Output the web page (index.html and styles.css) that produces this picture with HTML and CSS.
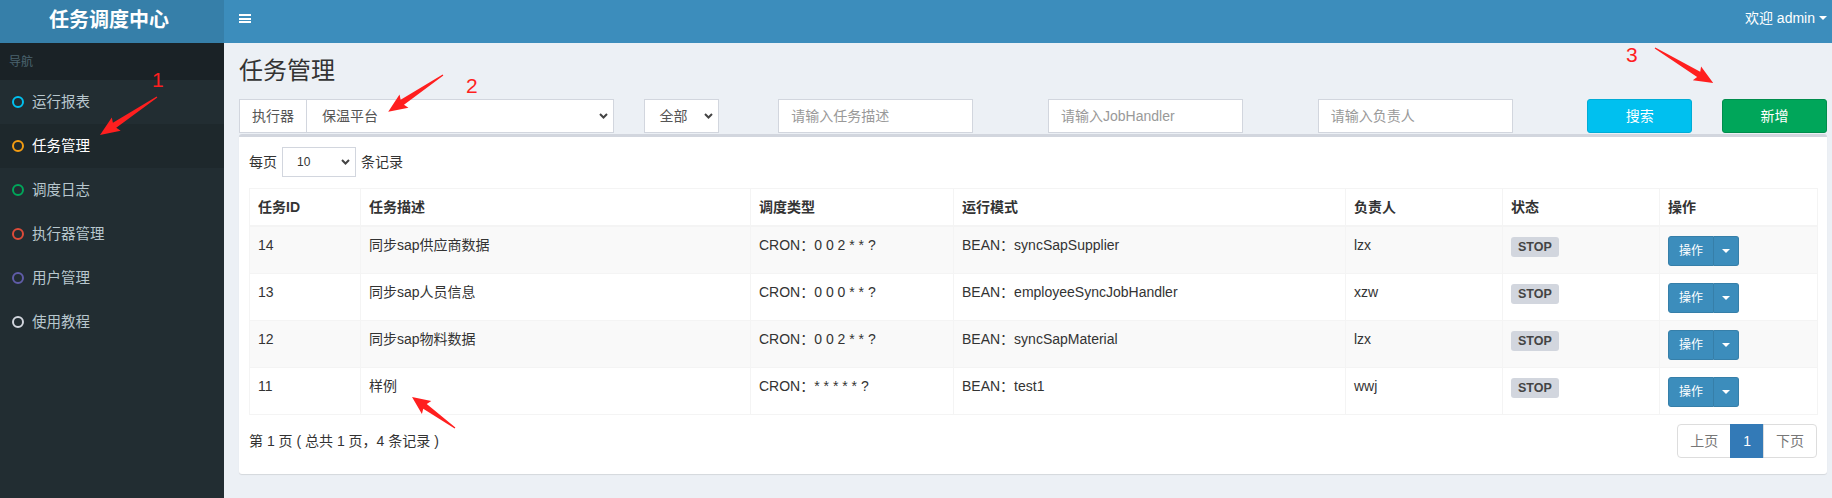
FILE: index.html
```html
<!DOCTYPE html>
<html lang="zh-CN">
<head>
<meta charset="utf-8">
<title>任务调度中心</title>
<link rel="stylesheet" href="styles.css">
</head>
<body>
<div class="app">
  <header class="logo">任务调度中心</header>
  <nav class="navbar">
    <span class="toggle"><i></i><i></i><i></i></span>
    <span class="user">欢迎 admin <span class="caret"></span></span>
  </nav>
  <aside class="sidebar">
    <div class="nav-header">导航</div>
    <ul class="menu">
      <li><span class="dot aqua"></span>运行报表</li>
      <li class="active"><span class="dot yellow"></span>任务管理</li>
      <li><span class="dot green"></span>调度日志</li>
      <li><span class="dot red"></span>执行器管理</li>
      <li><span class="dot purple"></span>用户管理</li>
      <li><span class="dot gray"></span>使用教程</li>
    </ul>
  </aside>
  <main class="content">
    <h1 class="page-title">任务管理</h1>
    <div class="filters">
      <div class="input-group span3">
        <span class="addon">执行器</span>
        <div class="select grow"><span>保温平台</span><svg class="chev" width="9" height="6" viewBox="0 0 9 6"><polyline points="1,1 4.5,4.5 8,1"/></svg></div>
      </div>
      <div class="span1">
        <div class="select status"><span>全部</span><svg class="chev" width="9" height="6" viewBox="0 0 9 6"><polyline points="1,1 4.5,4.5 8,1"/></svg></div>
      </div>
      <div class="span2"><input class="input" type="text" placeholder="请输入任务描述"></div>
      <div class="span2"><input class="input" type="text" placeholder="请输入JobHandler"></div>
      <div class="span2"><input class="input" type="text" placeholder="请输入负责人"></div>
      <div class="span1"><button class="btn btn-info">搜索</button></div>
      <div class="span1"><button class="btn btn-success">新增</button></div>
    </div>

    <section class="box">
      <div class="length">
        <span>每页</span>
        <div class="select select-sm"><span>10</span><svg class="chev" width="9" height="6" viewBox="0 0 9 6"><polyline points="1,1 4.5,4.5 8,1"/></svg></div>
        <span>条记录</span>
      </div>

      <table class="table">
        <colgroup>
          <col class="c-id"><col class="c-desc"><col class="c-type"><col class="c-mode"><col class="c-author"><col class="c-status"><col class="c-op">
        </colgroup>
        <thead>
          <tr><th>任务ID</th><th>任务描述</th><th>调度类型</th><th>运行模式</th><th>负责人</th><th>状态</th><th>操作</th></tr>
        </thead>
        <tbody>
          <tr>
            <td>14</td><td>同步sap供应商数据</td><td>CRON：0 0 2 * * ?</td><td>BEAN：syncSapSupplier</td><td>lzx</td>
            <td><span class="label">STOP</span></td>
            <td><div class="btn-group"><span class="op">操作</span><span class="op-caret"><i class="caret"></i></span></div></td>
          </tr>
          <tr>
            <td>13</td><td>同步sap人员信息</td><td>CRON：0 0 0 * * ?</td><td>BEAN：employeeSyncJobHandler</td><td>xzw</td>
            <td><span class="label">STOP</span></td>
            <td><div class="btn-group"><span class="op">操作</span><span class="op-caret"><i class="caret"></i></span></div></td>
          </tr>
          <tr>
            <td>12</td><td>同步sap物料数据</td><td>CRON：0 0 2 * * ?</td><td>BEAN：syncSapMaterial</td><td>lzx</td>
            <td><span class="label">STOP</span></td>
            <td><div class="btn-group"><span class="op">操作</span><span class="op-caret"><i class="caret"></i></span></div></td>
          </tr>
          <tr>
            <td>11</td><td>样例</td><td>CRON：* * * * * ?</td><td>BEAN：test1</td><td>wwj</td>
            <td><span class="label">STOP</span></td>
            <td><div class="btn-group"><span class="op">操作</span><span class="op-caret"><i class="caret"></i></span></div></td>
          </tr>
        </tbody>
      </table>

      <div class="table-footer">
        <span class="info">第 1 页 ( 总共 1 页，4 条记录 )</span>
        <ul class="pagination">
          <li class="disabled">上页</li>
          <li class="active">1</li>
          <li class="disabled">下页</li>
        </ul>
      </div>
    </section>
  </main>

  <svg class="annot" width="1832" height="498" viewBox="0 0 1832 498">
    <g class="arrow" transform="translate(157,97) rotate(146.3)"><polygon points="0,-0.6 51,-3 49,-8 68.5,0 49,8 51,3 0,0.6"/></g>
    <g class="arrow" transform="translate(443,75) rotate(146.1)"><polygon points="0,-0.6 49,-3 47,-8 66,0 47,8 49,3 0,0.6"/></g>
    <g class="arrow" transform="translate(1655,48) rotate(31.1)"><polygon points="0,-0.6 51,-3 49,-8 68,0 49,8 51,3 0,0.6"/></g>
    <g class="arrow" transform="translate(455,428) rotate(-144.2)"><polygon points="0,-0.6 37,-3 35,-8 53,0 35,8 37,3 0,0.6"/></g>
    <text class="num" x="152" y="87">1</text>
    <text class="num" x="466" y="93">2</text>
    <text class="num" x="1626" y="62">3</text>
  </svg>
</div>
</body>
</html>
```

FILE: styles.css
```css
* { box-sizing: border-box; }
html, body { margin: 0; height: 100%; }
body {
  font-family: "Liberation Sans", "Noto Sans CJK SC", sans-serif;
  font-size: 14px;
  line-height: 20px;
  color: #333;
  background: #ecf0f5;
}
.app {
  position: relative;
  display: grid;
  grid-template-columns: 224px 1fr;
  grid-template-rows: 43px 1fr;
  height: 100vh;
  overflow: hidden;
}

/* header */
.logo {
  background: #367fa9;
  color: #fff;
  font-size: 20px;
  font-weight: bold;
  display: flex;
  align-items: center;
  justify-content: center;
  padding: 0 6px 4px 0;
}
.navbar {
  background: #3c8dbc;
  color: #fff;
  display: flex;
  justify-content: space-between;
  align-items: flex-start;
  padding: 0 5px 0 15px;
}
.toggle {
  margin-top: 14px;
  width: 12px;
  display: flex;
  flex-direction: column;
  gap: 1.5px;
}
.toggle i { display: block; height: 2px; background: #fff; }
.user {
  margin-top: 8px;
  display: flex;
  align-items: center;
  gap: 4px;
}
.caret {
  display: inline-block;
  width: 0;
  height: 0;
  border-top: 4px solid #fff;
  border-left: 4px solid transparent;
  border-right: 4px solid transparent;
}

/* sidebar */
.sidebar { background: #222d32; }
.nav-header {
  height: 37px;
  background: #1a2226;
  color: #4b646f;
  font-size: 12px;
  display: flex;
  align-items: center;
  padding-left: 9px;
}
.menu { list-style: none; margin: 0; padding: 0; }
.menu li {
  height: 44px;
  display: flex;
  align-items: center;
  padding-left: 12px;
  color: #b8c7ce;
  font-size: 14.5px;
}
.menu li.active { background: #1e282c; color: #fff; }
.dot {
  width: 12px;
  height: 12px;
  border-radius: 50%;
  border: 2.5px solid;
  margin-right: 8px;
}
.dot.aqua { border-color: #00c0ef; }
.dot.yellow { border-color: #f39c12; }
.dot.green { border-color: #00a65a; }
.dot.red { border-color: #dd4b39; }
.dot.purple { border-color: #605ca8; }
.dot.gray { border-color: #d2d6de; }

/* content */
.content { padding: 15px 5px 0 15px; min-width: 0; }
.page-title {
  margin: 0 0 15px;
  font-size: 24px;
  line-height: 26px;
  font-weight: normal;
  color: #333;
}
.filters {
  display: grid;
  grid-template-columns: repeat(12, 1fr);
  column-gap: 30px;
  height: 34px;
  margin-bottom: 1px;
}
.span1 { grid-column: span 1; }
.span2 { grid-column: span 2; }
.span3 { grid-column: span 3; }
.input-group { display: flex; }
.addon {
  height: 34px;
  padding: 6px 12px;
  border: 1px solid #d2d6de;
  border-right: 0;
  background: #fff;
  color: #555;
}
.select {
  height: 34px;
  border: 1px solid #d2d6de;
  background: #fff;
  color: #555;
  display: flex;
  align-items: center;
  justify-content: space-between;
  padding: 0 5px 0 15px;
}
.select.grow { flex: 1; }
.select.status { width: 75px; }
.select-sm {
  height: 30px;
  width: 74px;
  font-size: 12px;
  padding-left: 14px;
  color: #333;
}
.chev { display: block; }
.chev polyline { fill: none; stroke: #444; stroke-width: 2; }
.input {
  width: 195px;
  height: 34px;
  border: 1px solid #d2d6de;
  padding: 6px 12px;
  font: inherit;
  color: #555;
  background: #fff;
  outline: none;
  border-radius: 0;
}
.input::placeholder { color: #999; }
.btn {
  width: 100%;
  height: 34px;
  border: 1px solid;
  border-radius: 3px;
  font: inherit;
  color: #fff;
  padding: 0;
}
.btn-info { background: #00c0ef; border-color: #00acd6; }
.btn-success { background: #00a65a; border-color: #008d4c; }

/* box */
.box {
  background: #fff;
  border-top: 3px solid #d2d6de;
  border-radius: 3px;
  box-shadow: 0 1px 1px rgba(0, 0, 0, 0.1);
  padding: 10px 10px 10px;
}
.length {
  display: flex;
  align-items: center;
  gap: 5px;
  height: 30px;
}
.table {
  width: 100%;
  margin-top: 11px;
  border-collapse: collapse;
  table-layout: fixed;
}
.c-id { width: 111px; }
.c-desc { width: 390px; }
.c-type { width: 203px; }
.c-mode { width: 392px; }
.c-author { width: 157px; }
.c-status { width: 157px; }
.c-op { width: 158px; }
.table th, .table td {
  border: 1px solid #f4f4f4;
  padding: 8px;
  text-align: left;
  vertical-align: top;
  white-space: nowrap;
}
.table th { font-weight: bold; border-bottom-width: 2px; vertical-align: bottom; }
.table tbody tr:nth-child(odd) { background: #f9f9f9; }
.label {
  display: inline-block;
  margin-top: 2px;
  padding: 3px 7px;
  font-size: 12.5px;
  line-height: 14px;
  font-weight: bold;
  color: #444;
  background: #d2d6de;
  border-radius: 3px;
}
.btn-group {
  display: flex;
  height: 30px;
  width: 71px;
  margin-top: 1px;
  margin-bottom: -1px;
  color: #fff;
  font-size: 12px;
}
.op {
  background: #3c8dbc;
  border: 1px solid #367fa9;
  border-radius: 3px 0 0 3px;
  padding: 5px 10px;
  line-height: 18px;
}
.op-caret {
  background: #3c8dbc;
  border: 1px solid #367fa9;
  border-left: 0;
  border-radius: 0 3px 3px 0;
  flex: 1;
  display: flex;
  align-items: center;
  justify-content: center;
}
.table-footer {
  display: flex;
  justify-content: space-between;
  align-items: center;
  margin-top: 9px;
  margin-bottom: 6px;
  height: 34px;
}
.pagination {
  list-style: none;
  margin: 0;
  padding: 0;
  display: flex;
}
.pagination li {
  padding: 6px 12px;
  border: 1px solid #ddd;
  margin-left: -1px;
  color: #777;
  background: #fff;
}
.pagination li:first-child { border-radius: 4px 0 0 4px; margin-left: 0; }
.pagination li:last-child { border-radius: 0 4px 4px 0; }
.pagination li.active { background: #337ab7; border-color: #337ab7; color: #fff; }

/* annotations */
.annot {
  position: absolute;
  top: 0;
  left: 0;
  pointer-events: none;
}
.arrow polygon { fill: #ff1f1f; }
.num {
  font-family: "Liberation Sans", sans-serif;
  font-size: 21px;
  fill: #ff1f1f;
}
```
